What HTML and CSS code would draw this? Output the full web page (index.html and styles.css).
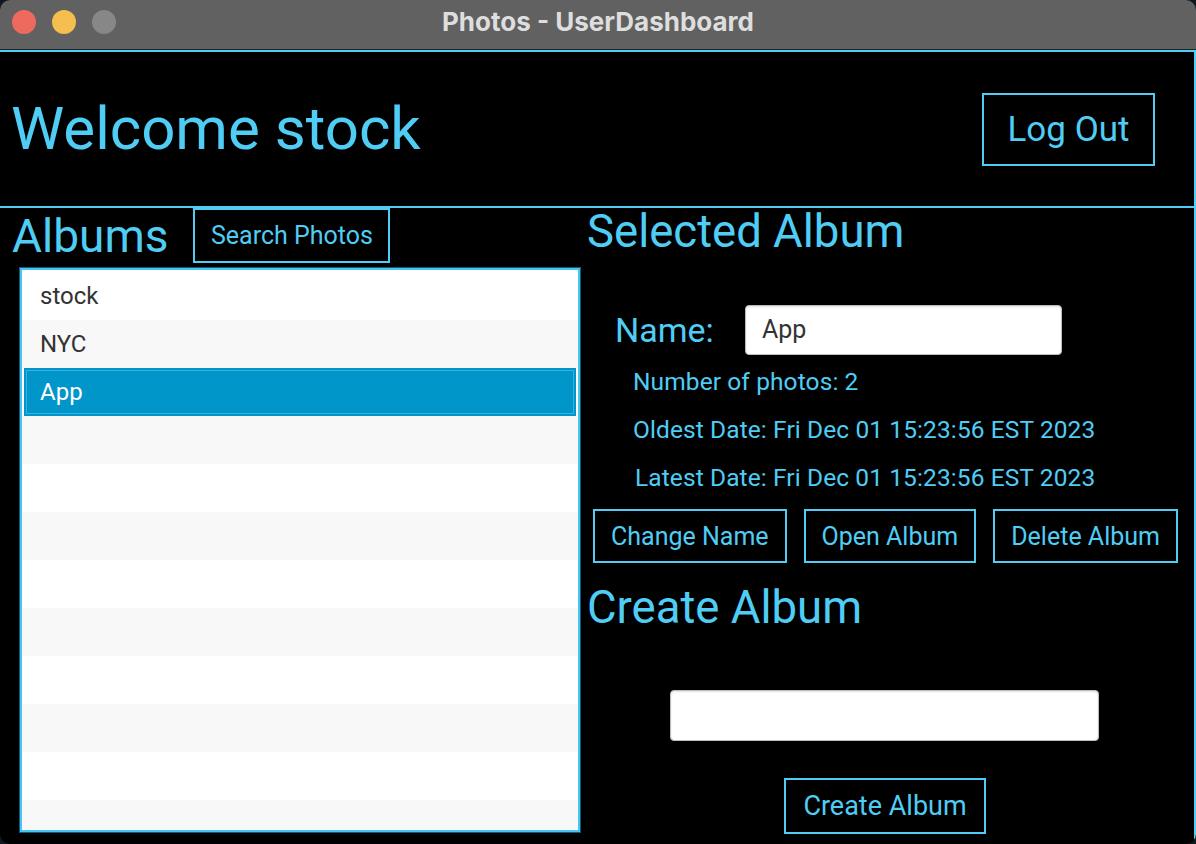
FILE: index.html
```html
<!DOCTYPE html>
<html>
<head>
<meta charset="utf-8">
<title>Photos - UserDashboard</title>
<link rel="stylesheet" href="styles.css">
</head>
<body>
<div class="window">
  <div class="titlebar">
    <div class="lights">
      <span class="light red"></span>
      <span class="light yellow"></span>
      <span class="light gray"></span>
    </div>
    <div class="title">Photos - UserDashboard</div>
  </div>
  <div class="content">
    <header class="header">
      <h1 class="welcome">Welcome stock</h1>
      <button class="btn btn-logout">Log Out</button>
    </header>
    <main class="main">
      <section class="left">
        <div class="albums-bar">
          <h2 class="heading">Albums</h2>
          <button class="btn btn-search">Search Photos</button>
        </div>
        <div class="list">
          <div class="row">stock</div>
          <div class="row odd">NYC</div>
          <div class="row selected">App</div>
          <div class="row odd"></div>
          <div class="row"></div>
          <div class="row odd"></div>
          <div class="row"></div>
          <div class="row odd"></div>
          <div class="row"></div>
          <div class="row odd"></div>
          <div class="row"></div>
          <div class="row odd"></div>
        </div>
      </section>
      <section class="right">
        <h2 class="heading selected-heading">Selected Album</h2>
        <div class="name-row">
          <label class="name-label">Name:</label>
          <div class="field name-field">App</div>
        </div>
        <div class="info">
          <div class="info-line">Number of photos: 2</div>
          <div class="info-line">Oldest Date: Fri Dec 01 15:23:56 EST 2023</div>
          <div class="info-line latest">Latest Date: Fri Dec 01 15:23:56 EST 2023</div>
        </div>
        <div class="actions">
          <button class="btn btn-action">Change Name</button>
          <button class="btn btn-action">Open Album</button>
          <button class="btn btn-action">Delete Album</button>
        </div>
        <h2 class="heading create-heading">Create Album</h2>
        <div class="field create-field"></div>
        <button class="btn btn-create">Create Album</button>
      </section>
    </main>
  </div>
</div>
</body>
</html>
```
FILE: styles.css
```css
* { box-sizing: border-box; }

html, body {
  margin: 0;
  padding: 0;
  background: #10181e;
  width: 1196px;
  height: 844px;
  overflow: hidden;
}

.window {
  width: 1196px;
  height: 844px;
  border-radius: 10px;
  overflow: hidden;
  display: flex;
  flex-direction: column;
  background: #000;
  font-family: Roboto, "Liberation Sans", sans-serif;
}

.titlebar {
  height: 50px;
  flex: none;
  background: #616161;
  border-bottom: 1px solid #222;
  position: relative;
  display: flex;
  align-items: center;
  justify-content: center;
}

.lights {
  position: absolute;
  left: 12px;
  top: 10px;
  display: flex;
  gap: 16px;
}

.light {
  width: 24px;
  height: 24px;
  border-radius: 50%;
  display: block;
}
.light.red { background: #ee6a5f; }
.light.yellow { background: #f5bf4f; }
.light.gray { background: #878787; }

.title {
  font-family: Inter, "Liberation Sans", sans-serif;
  font-weight: 700;
  font-size: 26px;
  color: #dedede;
  margin-top: -6px;
}

.content {
  flex: 1;
  border-top: 2px solid #4fcdf5;
  border-right: 2px solid #4fcdf5;
  display: flex;
  flex-direction: column;
  color: #4fcdf5;
}

.header {
  height: 156px;
  flex: none;
  border-bottom: 2px solid #4fcdf5;
  display: flex;
  align-items: center;
  justify-content: space-between;
  padding: 0 39px 0 11px;
}

.welcome {
  margin: 0;
  font-weight: 400;
  font-size: 60px;
  line-height: 72px;
  color: #4fcdf5;
}

.btn {
  background: transparent;
  border: 2px solid #4fcdf5;
  color: #4fcdf5;
  font-family: Roboto, "Liberation Sans", sans-serif;
  font-size: 25px;
  padding: 0 16px;
  border-radius: 0;
  margin: 0;
  cursor: pointer;
}

.btn-logout {
  width: 173px;
  height: 73px;
  font-size: 35px;
  padding: 0;
}

.main {
  flex: 1;
  display: grid;
  grid-template-columns: 580px 1fr;
  min-height: 0;
}

.left {
  display: flex;
  flex-direction: column;
  min-height: 0;
}

.albums-bar {
  height: 55px;
  display: flex;
  align-items: center;
  gap: 25px;
  padding-left: 12px;
}

.heading {
  margin: 0;
  font-weight: 400;
  font-size: 46px;
  line-height: 46px;
  color: #4fcdf5;
}

.btn-search {
  height: 55px;
  width: 197px;
  padding: 0;
}

.list {
  margin: 5px 0 0 20px;
  height: 564px;
  border: 2px solid #45c6f2;
  box-shadow: 0 0 0 1px #14597a;
  background: #fff;
  padding-top: 2px;
  overflow: hidden;
}

.row {
  height: 48px;
  line-height: 48px;
  padding-left: 18px;
  font-family: Roboto, "Liberation Sans", sans-serif;
  font-size: 24px;
  color: #333;
  background: #fff;
}
.row.odd { background: #f8f8f8; }
.row.selected {
  background: #0096c9;
  color: #fff;
  margin: 0 2px;
  padding-left: 16px;
  box-shadow: inset 0 0 0 2px #0096c9, inset 0 0 0 3px #3db0dd;
}

.right {
  display: flex;
  flex-direction: column;
  align-items: flex-start;
}

.selected-heading {
  font-size: 45.5px;
  margin: 1px 0 0 7px;
}

.name-row {
  margin-top: 50px;
  display: flex;
  align-items: center;
  height: 50px;
}

.name-label {
  font-size: 34px;
  margin-left: 35px;
  width: 130px;
}

.field {
  background: #fff;
  border: 1px solid #bdbdbd;
  border-radius: 4px;
  box-shadow: inset 0 1px 2px rgba(0,0,0,0.12);
  height: 50px;
  font-size: 25px;
  line-height: 48px;
  color: #333;
  padding-left: 16px;
}

.name-field { width: 317px; }

.info {
  margin-top: 3px;
  margin-left: 53px;
}

.info-line {
  font-size: 24.5px;
  line-height: 48px;
  height: 48px;
  letter-spacing: 0.1px;
}
.info-line.latest { margin-left: 2px; }

.actions {
  margin: 7px 0 0 13px;
  display: flex;
  gap: 17px;
}

.btn-action {
  height: 54px;
}

.create-heading {
  font-size: 45.5px;
  margin: 22px 0 0 7px;
}

.create-field {
  width: 429px;
  height: 51px;
  margin: 59px 0 0 90px;
}

.btn-create {
  margin: 37px 0 0 204px;
  height: 56px;
  width: 202px;
  padding: 0;
  font-size: 27px;
}
```
